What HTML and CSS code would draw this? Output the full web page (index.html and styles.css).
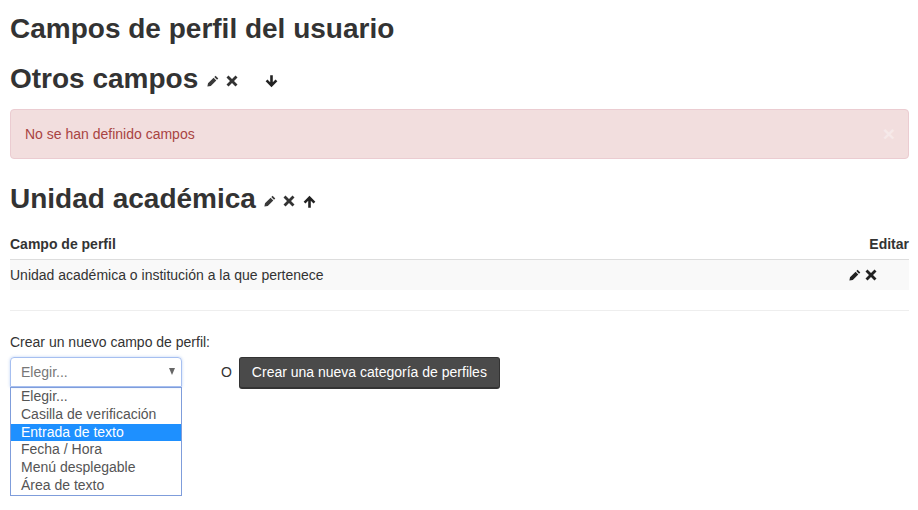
FILE: index.html
```html
<!DOCTYPE html>
<html lang="es">
<head>
<meta charset="utf-8">
<title>Campos de perfil del usuario</title>
<link rel="stylesheet" href="styles.css">
</head>
<body>
<svg class="defs" width="0" height="0" aria-hidden="true">
  <symbol id="i-pen" viewBox="0 0 12 12"><path d="M8.6.7 11.3 3.4 10 4.7 7.3 2ZM6.6 2.7 9.3 5.4 3.8 11 .4 11.6 1 8.3Z"/></symbol>
  <symbol id="i-x" viewBox="0 0 12 12"><path d="M2.5.5 6 4 9.5.5 11.5 2.5 8 6 11.5 9.5 9.5 11.5 6 8 2.5 11.5.5 9.5 4 6 .5 2.5Z"/></symbol>
  <symbol id="i-down" viewBox="0 0 12 12"><path d="M4.8.3H7.2V6.6L9.7 4.1 11.4 5.8 6 11.4.6 5.8 2.3 4.1 4.8 6.6Z"/></symbol>
  <symbol id="i-up" viewBox="0 0 12 12"><path d="M4.8 11.7H7.2V5.4L9.7 7.9 11.4 6.2 6 .6.6 6.2 2.3 7.9 4.8 5.4Z"/></symbol>
</svg>
<h2 class="page-title">Campos de perfil del usuario</h2>
<h3 class="cat-title cat-first">Otros campos<span class="icons"><svg class="ic ic-pen"><use href="#i-pen"/></svg><svg class="ic ic-x"><use href="#i-x"/></svg><svg class="ic ic-arrow ic-spaced"><use href="#i-down"/></svg></span></h3>
<div class="alert"><span>No se han definido campos</span><span class="close">×</span></div>
<h3 class="cat-title cat-second">Unidad académica<span class="icons"><svg class="ic ic-pen"><use href="#i-pen"/></svg><svg class="ic ic-x"><use href="#i-x"/></svg><svg class="ic ic-arrow"><use href="#i-up"/></svg></span></h3>
<table class="fields">
  <thead><tr><th>Campo de perfil</th><th class="edit">Editar</th></tr></thead>
  <tbody><tr><td>Unidad académica o institución a la que pertenece</td><td class="actions"><svg class="ic ic-pen dark"><use href="#i-pen"/></svg><svg class="ic ic-x dark"><use href="#i-x"/></svg></td></tr></tbody>
</table>
<hr class="rule">
<div class="label">Crear un nuevo campo de perfil:</div>
<div class="create">
  <div class="picker">
    <div class="select"><span>Elegir...</span><span class="caret"></span></div>
    <ul class="options">
      <li>Elegir...</li>
      <li>Casilla de verificación</li>
      <li class="on">Entrada de texto</li>
      <li>Fecha / Hora</li>
      <li>Menú desplegable</li>
      <li>Área de texto</li>
    </ul>
  </div>
  <span class="or">O</span>
  <button class="btn" type="button">Crear una nueva categoría de perfiles</button>
</div>
</body>
</html>
```
FILE: styles.css
```css
* { box-sizing: border-box; }
html, body { margin: 0; background: #fff; }
body { padding: 0 9px 0 10px; font: 14px/20px "Liberation Sans", Arial, sans-serif; color: #333; overflow: hidden; }
.defs { position: absolute; }
.page-title { margin: 0; padding-top: 14px; font-size: 28px; line-height: 30px; font-weight: 700; }
.cat-title { margin: 0; padding-top: 18px; font-size: 28px; line-height: 34px; font-weight: 700; display: flex; align-items: center; }
.cat-second { padding-top: 23px; }
.icons { display: flex; align-items: center; margin-left: 8px; padding-top: 4px; }
.cat-first .icons { margin-left: 9px; }
.ic { display: block; width: 12px; height: 12px; fill: #333; }
.ic-pen { width: 12px; height: 12px; margin-right: 7px; fill: #3a3a3a; }
.ic-x { width: 12px; height: 12px; margin-right: 8px; }
.ic-arrow { width: 13px; height: 13px; fill: #222; }
.ic-spaced { margin-left: 19px; }
.alert { display: flex; justify-content: space-between; align-items: center; height: 50px; margin-top: 13px; padding: 0 13px 0 14px; background: #f2dede; border: 1px solid #ebccd1; border-radius: 4px; color: #a94442; }
.close { font-size: 21px; font-weight: 700; color: #fff; opacity: .35; }
.fields { width: 100%; margin-top: 10px; border-collapse: collapse; }
.fields th { padding: 8px 0 5px; text-align: left; font-weight: 700; line-height: 20px; border-bottom: 1px solid #ddd; }
.fields th.edit { text-align: right; }
.fields td { height: 30px; padding: 0; background: #f9f9f9; }
.fields td.actions { width: 60px; padding-right: 32px; }
.actions { font-size: 0; }
.actions .ic { display: inline-block; vertical-align: middle; }
.actions .ic-pen { margin-right: 4px; }
.actions .ic-x { margin-right: 0; }
.dark { fill: #222; }
.rule { margin: 20px 0 0; border: 0; border-top: 1px solid #eee; }
.label { margin-top: 21px; line-height: 20px; }
.create { display: flex; align-items: flex-start; margin-top: 5px; }
.picker { width: 172px; }
.select { display: flex; justify-content: space-between; align-items: center; height: 30px; padding: 0 5px 0 10px; color: #777; border: 1px solid #a6bff0; border-radius: 4px 4px 0 0; box-shadow: 0 0 3px rgba(102,150,233,.45); }
.caret { width: 0; height: 0; border-left: 3.5px solid transparent; border-right: 3.5px solid transparent; border-top: 7px solid #666; margin-right: 1px; }
.options { list-style: none; margin: 0; padding: .45px 0 0; border: 1px solid #7f9ddb; color: #555; line-height: 17.8px; height: 109px; }
.options li { padding-left: 10px; height: 17.8px; }
.options .on { background: #1e90ff; color: #fff; }
.or { margin-left: 39px; margin-top: 5px; line-height: 20px; color: #333; }
.btn { margin: 0 0 0 7px; height: 32px; width: 261px; padding: 0; font: 14px "Liberation Sans", Arial, sans-serif; color: #fff; background: #4a4a4a; border: 1px solid #333; border-bottom-width: 2px; border-radius: 3px; }
```
